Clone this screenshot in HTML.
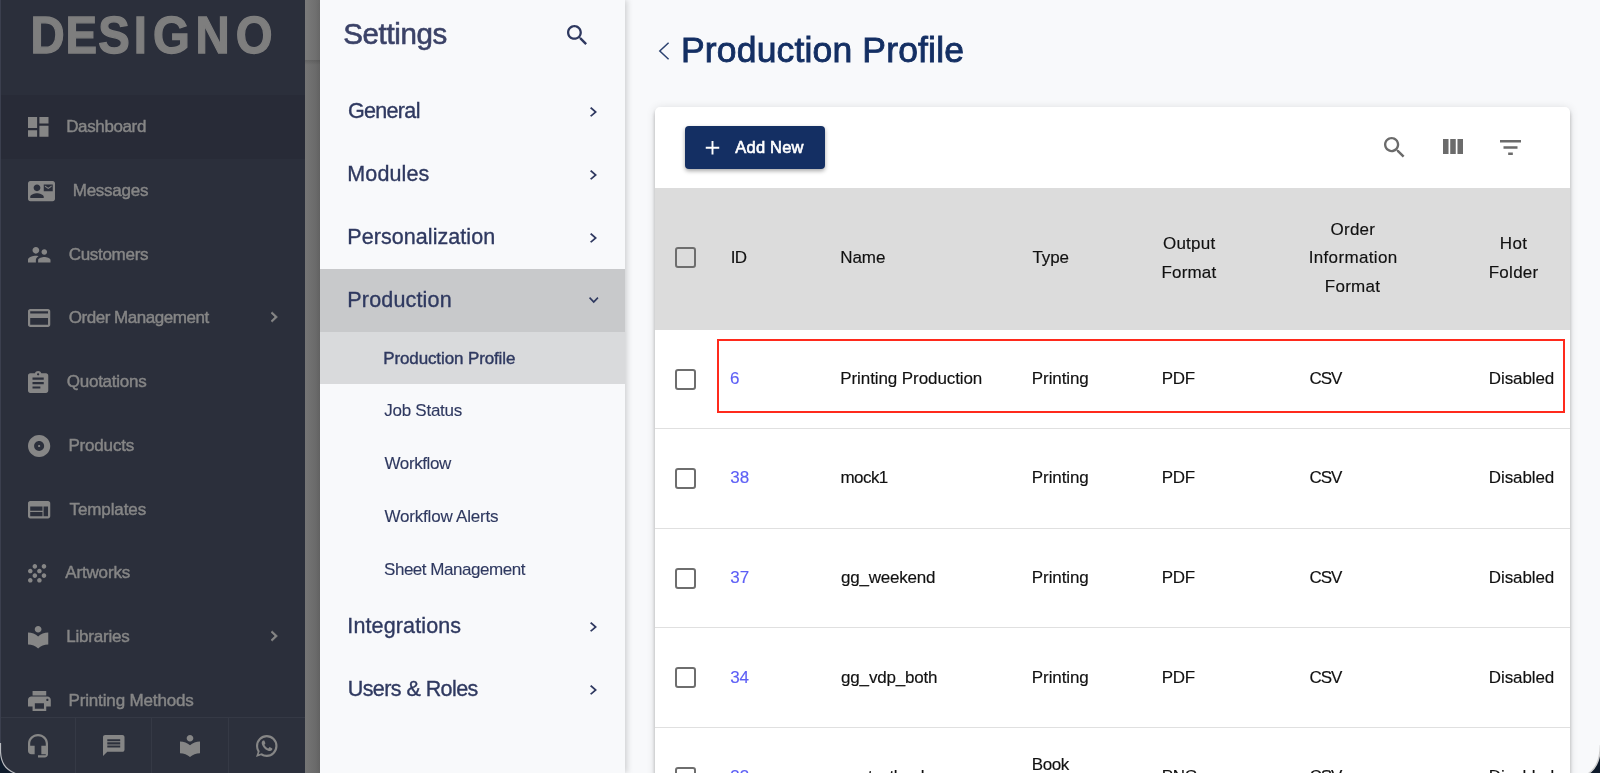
<!DOCTYPE html>
<html lang="en">
<head>
<meta charset="utf-8">
<title>Production Profile</title>
<style>
*{box-sizing:border-box;margin:0;padding:0}
html,body{width:1600px;height:773px;overflow:hidden}
body{position:relative;background:#f8f9fb;font-family:"Liberation Sans",sans-serif;color:#111}
.abs{position:absolute}
svg{display:block;overflow:visible}
.tl{position:absolute;left:0;top:0;width:100%;height:100%;will-change:transform}

/* ---------- left dark sidebar ---------- */
#side{position:absolute;left:0;top:0;width:305px;height:773px;background:#2b2f3b;overflow:hidden}
#logo{position:absolute;left:0;top:0}
#side .active{position:absolute;left:0;top:95px;width:305px;height:64px;background:#282b37}
.it{position:absolute;left:0;top:0;width:305px;height:0}
.it svg{position:absolute;fill:#868686}
.it span{position:absolute;white-space:nowrap;color:#868686;-webkit-text-stroke:.45px #868686}
#bbar{position:absolute;left:0;top:717px;width:305px;height:56px;background:#2c303c;border-top:1px solid #353945}
#bbar i{position:absolute;top:0;width:1px;height:56px;background:#353945}
#bbar svg{position:absolute;fill:#868686}

/* ---------- dim strip ---------- */
#strip{position:absolute;left:305px;top:0;width:15px;height:773px;background:linear-gradient(90deg,#757575,#6f6f6f 40%,#666)}
#strip b{position:absolute;left:0;top:0;width:15px;height:60px;background:linear-gradient(90deg,#7b7b7b,#747474 40%,#6b6b6b)}
#strip u{position:absolute;left:0;top:60px;width:15px;height:5px;background:linear-gradient(180deg,rgba(0,0,0,.12),rgba(0,0,0,0))}

/* ---------- settings panel ---------- */
#set{position:absolute;left:320px;top:0;width:305px;height:773px;background:#f8f9fb;box-shadow:2px 0 6px rgba(0,0,0,.17)}
#set span{position:absolute;white-space:nowrap;color:#2f3960;-webkit-text-stroke:0.35px #2f3960}
#set .h{color:#3b4267;-webkit-text-stroke:.6px #3b4267}
#set .s{-webkit-text-stroke:.12px #2f3960}
#set .s.a{-webkit-text-stroke:.4px #2f3960}
#set svg{position:absolute;fill:#2f3960}
#set .bg1{position:absolute;left:0;top:269px;width:305px;height:63px;background:#c8c9cb}
#set .bg2{position:absolute;left:0;top:332px;width:305px;height:52px;background:#d9dadc}

/* ---------- main ---------- */
#title{position:absolute;color:#142f63;white-space:nowrap;-webkit-text-stroke:0.85px #142f63}
#back{position:absolute}
#card{position:absolute;left:655px;top:107px;width:915px;height:700px;background:#fff;border-radius:5px;box-shadow:0 2px 4px -1px rgba(0,0,0,.2),0 4px 5px rgba(0,0,0,.14),0 1px 10px rgba(0,0,0,.12);overflow:hidden}
#btn{position:absolute;left:30px;top:19px;width:140px;height:43px;background:#142f63;border-radius:4px;box-shadow:0 2px 4px rgba(0,0,0,.35)}
#btn svg{position:absolute;fill:#fff}
#btn span{position:absolute;color:#fff;white-space:nowrap;-webkit-text-stroke:.6px #fff}
#card .ti{position:absolute;fill:#6b6b6b}
#thead{position:absolute;left:0;top:81px;width:915px;height:142px;background:#dcdcdc}
.th{position:absolute;color:#111;white-space:nowrap;-webkit-text-stroke:.15px #111}
.row{position:absolute;left:0;top:0;width:915px;height:0}
.row .ln{position:absolute;left:0;width:915px;height:1px;background:#e0e0e0}
.row span{position:absolute;color:#111;white-space:nowrap;-webkit-text-stroke:.15px #111}
.row span.id{color:#5d5ff5;-webkit-text-stroke:.15px #5d5ff5}
.cb{position:absolute;left:20px;width:21px;height:21px;border:2px solid #6e6e6e;border-radius:3px;background:#fff}
#red{position:absolute;border:2px solid #ff2a1c}

/* window rounded corners */
.corner{position:absolute}
#ledge{position:absolute;left:0;top:0;width:1px;height:752px;background:#3b3f4e}
</style>
</head>
<body>

<div id="side">
  <svg id="logo" width="305" height="70" viewBox="0 0 305 70"><text transform="scale(0.91,1)" x="33.6 71.9 108.0 147.1 168.1 214.7 259.2" y="52.7" font-family="Liberation Sans, sans-serif" font-weight="bold" font-size="52" fill="#7e7e7e" stroke="#7e7e7e" stroke-width="1.3">DESIGNO</text></svg>
  <div class="active"></div>
  <div class="tl">
  <div class="it"><svg style="left:27.5px;top:117px" width="20.5" height="19.75" viewBox="3 3 18 18" preserveAspectRatio="none"><path d="M3 13h8V3H3v10zm0 8h8v-6H3v6zm10 0h8V11h-8v10zm0-18v6h8V3h-8z"/></svg><span style="left:66.22px;top:118px;font-size:17px;line-height:17px;letter-spacing:-0.379px">Dashboard</span>
  </div>
  <div class="it"><svg style="left:27.5px;top:180.5px" width="27" height="20.25" viewBox="0 3 24 18" preserveAspectRatio="none"><path d="M21 8V7l-3 2-3-2v1l3 2 3-2zm1-5H2C.9 3 0 3.9 0 5v14c0 1.1.9 2 2 2h20c1.1 0 1.99-.9 1.99-2L24 5c0-1.1-.9-2-2-2zM8 6c1.66 0 3 1.34 3 3s-1.34 3-3 3-3-1.34-3-3 1.34-3 3-3zm6 12H2v-1c0-2 4-3.1 6-3.1s6 1.1 6 3.1v1zm8-6h-8V6h8v6z"/></svg><span style="left:72.72px;top:182px;font-size:17px;line-height:17px;letter-spacing:-0.246px">Messages</span>
  </div>
  <div class="it"><svg style="left:27.5px;top:247px" width="22.5" height="15.5" viewBox="2 5 20 14" preserveAspectRatio="none"><path d="M16.5 12c1.38 0 2.49-1.12 2.49-2.5S17.88 7 16.5 7C15.12 7 14 8.12 14 9.5s1.12 2.5 2.5 2.5zM9 11c1.66 0 2.99-1.34 2.99-3S10.66 5 9 5C7.34 5 6 6.34 6 8s1.34 3 3 3zm7.5 3c-1.83 0-5.5.92-5.5 2.75V19h11v-2.250c0-1.830-3.670-2.750-5.500-2.750zM9 13c-2.330 0-7 1.170-7 3.500V19h7v-2.250c0-.850.330-2.340 2.370-3.470C10.500 13.100 9.660 13 9 13z"/></svg><span style="left:68.75px;top:246px;font-size:17px;line-height:17px;letter-spacing:-0.307px">Customers</span>
  </div>
  <div class="it"><svg style="left:27.75px;top:309.25px" width="22.25" height="18" viewBox="2 4 20 16" preserveAspectRatio="none"><path d="M20 4H4c-1.11 0-1.99.89-1.99 2L2 18c0 1.11.89 2 2 2h16c1.11 0 2-.89 2-2V6c0-1.11-.89-2-2-2zm0 14H4v-6h16v6zm0-10H4V6h16v2z"/></svg><span style="left:68.75px;top:309px;font-size:17px;line-height:17px;letter-spacing:-0.468px">Order Management</span>
    <svg style="left:270.5px;top:312.45px" width="6.5" height="10" viewBox="8.59 6 7.41 12" preserveAspectRatio="none" stroke="#868686" stroke-width=".7"><path d="M10 6L8.59 7.41 13.17 12l-4.58 4.59L10 18l6-6z"/></svg>
  </div>
  <div class="it"><svg style="left:27.75px;top:371px" width="20.25" height="22" viewBox="3 1 18 20" preserveAspectRatio="none"><path d="M19 3h-4.18C14.4 1.84 13.3 1 12 1c-1.3 0-2.4.84-2.82 2H5c-1.1 0-2 .9-2 2v14c0 1.1.9 2 2 2h14c1.1 0 2-.9 2-2V5c0-1.1-.9-2-2-2zm-7 0c.55 0 1 .45 1 1s-.45 1-1 1-1-.45-1-1 .45-1 1-1zm2 14H7v-2h7v2zm3-4H7v-2h10v2zm0-4H7V7h10v2z"/></svg><span style="left:66.75px;top:373px;font-size:17px;line-height:17px;letter-spacing:-0.249px">Quotations</span>
  </div>
  <div class="it"><svg style="left:27.75px;top:434.75px" width="22.25" height="22" viewBox="2 2 20 20" preserveAspectRatio="none"><path d="M12 2C6.48 2 2 6.48 2 12s4.48 10 10 10 10-4.48 10-10S17.52 2 12 2zm0 14.5c-2.49 0-4.5-2.01-4.5-4.5S9.51 7.5 12 7.5s4.5 2.01 4.5 4.5-2.01 4.5-4.5 4.5zm0-5.5c-.55 0-1 .45-1 1s.45 1 1 1 1-.45 1-1-.45-1-1-1z"/></svg><span style="left:68.47px;top:437px;font-size:17px;line-height:17px;letter-spacing:-0.190px">Products</span>
  </div>
  <div class="it"><svg style="left:27.75px;top:501px" width="22.25" height="17.5" viewBox="2 4 20 16" preserveAspectRatio="none"><path d="M20 4H4c-1.1 0-1.99.9-1.99 2L2 18c0 1.1.9 2 2 2h16c1.1 0 2-.9 2-2V6c0-1.1-.9-2-2-2zm-5 14H4v-4h11v4zm0-5H4V9h11v4zm5 5h-4V9h4v9z"/></svg><span style="left:69.53px;top:501px;font-size:17px;line-height:17px;letter-spacing:-0.098px">Templates</span>
  </div>
  <div class="it"><svg style="left:27.75px;top:564.25px" width="18.25" height="18.5" viewBox="4 4 16 16" preserveAspectRatio="none"><path d="M10 12c-1.1 0-2 .9-2 2s.9 2 2 2 2-.9 2-2-.9-2-2-2zM6 8c-1.1 0-2 .9-2 2s.9 2 2 2 2-.9 2-2-.9-2-2-2zm0 8c-1.1 0-2 .9-2 2s.9 2 2 2 2-.9 2-2-.9-2-2-2zm12-8c1.1 0 2-.9 2-2s-.9-2-2-2-2 .9-2 2 .9 2 2 2zm-4 8c-1.1 0-2 .9-2 2s.9 2 2 2 2-.9 2-2-.9-2-2-2zm4-4c-1.1 0-2 .9-2 2s.9 2 2 2 2-.9 2-2-.9-2-2-2zm-4-4c-1.1 0-2 .9-2 2s.9 2 2 2 2-.9 2-2-.9-2-2-2zm-4-4c-1.1 0-2 .9-2 2s.9 2 2 2 2-.9 2-2-.9-2-2-2z"/></svg><span style="left:65.30px;top:564px;font-size:17px;line-height:17px;letter-spacing:-0.169px">Artworks</span>
  </div>
  <div class="it"><svg style="left:27.75px;top:626px" width="20.25" height="22.5" viewBox="3 2 18 20.55" preserveAspectRatio="none"><path d="M12 11.55C9.64 9.35 6.48 8 3 8v11c3.48 0 6.64 1.35 9 3.55 2.36-2.19 5.52-3.55 9-3.55V8c-3.48 0-6.64 1.35-9 3.55zM12 8c1.66 0 3-1.34 3-3s-1.34-3-3-3-3 1.34-3 3 1.34 3 3 3z"/></svg><span style="left:66.22px;top:628px;font-size:17px;line-height:17px;letter-spacing:-0.211px">Libraries</span>
    <svg style="left:270.5px;top:631.2px" width="6.5" height="10" viewBox="8.59 6 7.41 12" preserveAspectRatio="none" stroke="#868686" stroke-width=".7"><path d="M10 6L8.59 7.41 13.17 12l-4.58 4.59L10 18l6-6z"/></svg>
  </div>
  <div class="it"><svg style="left:27.6px;top:691px" width="22.8" height="20" viewBox="2 3 20 18" preserveAspectRatio="none"><path d="M19 8H5c-1.66 0-3 1.34-3 3v6h4v4h12v-4h4v-6c0-1.66-1.34-3-3-3zm-3 11H8v-5h8v5zm3-7c-.55 0-1-.45-1-1s.45-1 1-1 1 .45 1 1-.45 1-1 1zm-1-9H6v4h12V3z"/></svg><span style="left:68.47px;top:692px;font-size:17px;line-height:17px;letter-spacing:-0.147px">Printing Methods</span>
  </div>
  </div>
  <div id="bbar"><i style="left:75px"></i><i style="left:151px"></i><i style="left:228px"></i>
    <svg style="left:27.5px;top:16px" width="20" height="23.5" viewBox="3 1 18 22" preserveAspectRatio="none"><path d="M12 1c-4.97 0-9 4.03-9 9v7c0 1.66 1.34 3 3 3h3v-8H5v-2c0-3.87 3.13-7 7-7s7 3.13 7 7v2h-4v8h4v1h-7v2h6c1.66 0 3-1.34 3-3V10c0-4.97-4.03-9-9-9z"/></svg>
    <svg style="left:103px;top:17px" width="21.5" height="21" viewBox="2 2 20 20" preserveAspectRatio="none"><path d="M20 2H4c-1.1 0-1.99.9-1.99 2L2 22l4-4h14c1.1 0 2-.9 2-2V4c0-1.1-.9-2-2-2zm-2 12H6v-2h12v2zm0-3H6V9h12v2zm0-3H6V6h12v2z"/></svg>
    <svg style="left:180px;top:16.5px" width="20" height="22" viewBox="3 2 18 20.55" preserveAspectRatio="none"><path d="M12 11.55C9.64 9.35 6.48 8 3 8v11c3.48 0 6.64 1.35 9 3.55 2.36-2.19 5.52-3.55 9-3.55V8c-3.48 0-6.64 1.35-9 3.55zM12 8c1.66 0 3-1.34 3-3s-1.34-3-3-3-3 1.34-3 3 1.34 3 3 3z"/></svg>
    <svg style="left:255.5px;top:16.5px" width="21.5" height="22" viewBox="2 2 20 20" preserveAspectRatio="none"><path d="M16.75 13.96c.25.13.41.2.46.3.06.11.04.61-.21 1.18-.2.56-1.24 1.1-1.7 1.12-.46.02-.47.36-2.96-.73-2.49-1.09-3.99-3.75-4.11-3.92-.12-.17-.96-1.38-.92-2.61.05-1.22.69-1.8.95-2.04.24-.26.51-.29.68-.26h.47c.15 0 .36-.06.55.45l.69 1.87c.06.13.1.28.01.44l-.27.41-.39.42c-.12.12-.26.25-.12.5.12.26.62 1.09 1.32 1.78.91.88 1.71 1.17 1.95 1.3.24.14.39.12.54-.04l.81-.94c.19-.25.35-.19.58-.11l1.67.88M12 2a10 10 0 0 1 10 10 10 10 0 0 1-10 10c-1.97 0-3.8-.57-5.35-1.55L2 22l1.55-4.650A9.969 9.969 0 0 1 2 12 10 10 0 0 1 12 2m0 2a8 8 0 0 0-8 8c0 1.720.540 3.310 1.460 4.610L4.500 19.500l2.890-.960A7.950 7.950 0 0 0 12 20a8 8 0 0 0 8-8 8 8 0 0 0-8-8z"/></svg>
  </div>
</div>

<div id="strip"><b></b><u></u></div>

<div id="set">
  <div class="bg1"></div><div class="bg2"></div><div class="tl">
  <span class="h" style="left:23.33px;top:19px;font-size:29.5px;line-height:29.5px;letter-spacing:-0.393px">Settings</span>
  <svg style="left:246.6px;top:25.3px" width="20" height="20" viewBox="3 3 17.49 17.49" preserveAspectRatio="none"><path d="M15.5 14h-.79l-.28-.27C15.41 12.59 16 11.11 16 9.5 16 5.91 13.09 3 9.5 3S3 5.91 3 9.5 5.91 16 9.5 16c1.61 0 3.09-.59 4.23-1.57l.27.28v.79l5 4.990L20.490 19l-4.990-5zm-6 0C7.010 14 5 11.990 5 9.500S7.010 5 9.500 5 14 7.010 14 9.500 11.990 14 9.500 14z"/></svg>
  <span class="g" style="left:27.99px;top:101px;font-size:21.5px;line-height:21.5px;letter-spacing:-0.677px">General</span>
  <svg style="left:270px;top:106.8px" width="7" height="9.8" viewBox="8.59 6 7.41 12" preserveAspectRatio="none"><path d="M10 6L8.59 7.41 13.17 12l-4.58 4.59L10 18l6-6z"/></svg>
  <span class="g" style="left:27.32px;top:164px;font-size:21.5px;line-height:21.5px;letter-spacing:0.131px">Modules</span>
  <svg style="left:270px;top:170px" width="7" height="9.8" viewBox="8.59 6 7.41 12" preserveAspectRatio="none"><path d="M10 6L8.59 7.41 13.17 12l-4.58 4.59L10 18l6-6z"/></svg>
  <span class="g" style="left:27.32px;top:227px;font-size:21.5px;line-height:21.5px;letter-spacing:0.059px">Personalization</span>
  <svg style="left:270px;top:233px" width="7" height="9.8" viewBox="8.59 6 7.41 12" preserveAspectRatio="none"><path d="M10 6L8.59 7.41 13.17 12l-4.58 4.59L10 18l6-6z"/></svg>
  <span class="g" style="left:27.32px;top:290px;font-size:21.5px;line-height:21.5px;letter-spacing:0.172px">Production</span>
  <svg style="left:269.25px;top:297.25px" width="9.5" height="6.25" viewBox="6 8.59 12 7.41" preserveAspectRatio="none"><path d="M16.59 8.59L12 13.17 7.41 8.59 6 10l6 6 6-6z"/></svg>
  <span class="g" style="left:27.32px;top:616px;font-size:21.5px;line-height:21.5px;letter-spacing:0.132px">Integrations</span>
  <svg style="left:270px;top:622px" width="7" height="9.8" viewBox="8.59 6 7.41 12" preserveAspectRatio="none"><path d="M10 6L8.59 7.41 13.17 12l-4.58 4.59L10 18l6-6z"/></svg>
  <span class="g" style="left:27.66px;top:679px;font-size:21.5px;line-height:21.5px;letter-spacing:-0.557px">Users &amp; Roles</span>
  <svg style="left:270px;top:685px" width="7" height="9.8" viewBox="8.59 6 7.41 12" preserveAspectRatio="none"><path d="M10 6L8.59 7.41 13.17 12l-4.58 4.59L10 18l6-6z"/></svg>
  <span class="s a" style="left:63.22px;top:350px;font-size:17px;line-height:17px;letter-spacing:-0.119px">Production Profile</span>
  <span class="s" style="left:64.28px;top:402px;font-size:17px;line-height:17px;letter-spacing:-0.264px">Job Status</span>
  <span class="s" style="left:64.55px;top:455px;font-size:17px;line-height:17px;letter-spacing:-0.413px">Workflow</span>
  <span class="s" style="left:64.55px;top:508px;font-size:17px;line-height:17px;letter-spacing:-0.202px">Workflow Alerts</span>
  <span class="s" style="left:64.02px;top:561px;font-size:17px;line-height:17px;letter-spacing:-0.467px">Sheet Management</span>
  </div>
</div>

<svg id="back" style="left:658px;top:41.500px" width="12" height="18" viewBox="0 0 12 18"><path d="M10.6 0.8 L1.8 9 L10.600 17.200" fill="none" stroke="#2c4270" stroke-width="1.5"/></svg>
<div class="tl"><span id="title" style="left:681.03px;top:33px;font-size:35.5px;line-height:35.5px;letter-spacing:0.159px">Production Profile</span></div>

<div id="card">
  <div id="btn"><svg style="left:19.5px;top:15px" width="15" height="13.5" viewBox="5 5 14 14"><path d="M19 13h-6v6h-2v-6H5v-2h6V5h2v6h6v2z"/></svg><div class="tl"><span style="left:50.30px;top:13px;font-size:16.5px;line-height:16.5px;letter-spacing:0.208px">Add New</span></div></div>
  <svg class="ti" style="left:729px;top:30px" width="20.5" height="20.5" viewBox="3 3 17.49 17.49" preserveAspectRatio="none"><path d="M15.5 14h-.79l-.28-.27C15.41 12.59 16 11.11 16 9.5 16 5.91 13.09 3 9.5 3S3 5.91 3 9.5 5.91 16 9.5 16c1.61 0 3.09-.59 4.23-1.57l.27.28v.79l5 4.990L20.490 19l-4.990-5zm-6 0C7.010 14 5 11.990 5 9.500S7.010 5 9.500 5 14 7.010 14 9.500 11.990 14 9.500 14z"/></svg>
  <svg class="ti" style="left:788px;top:31.75px" width="20" height="15" viewBox="4 5 17 13" preserveAspectRatio="none"><path d="M4 5h4.7v13H4z M10.15 5h4.7v13h-4.7z M16.3 5H21v13h-4.7z"/></svg>
  <svg class="ti" style="left:845px;top:32.5px" width="21" height="15" viewBox="3 6 18 12" preserveAspectRatio="none"><path d="M10 18h4v-2h-4v2zM3 6v2h18V6H3zm3 7h12v-2H6v2z"/></svg>
  <div id="thead">
    <div class="tl">
    <div class="cb" style="left:20px;top:59px;background:transparent"></div>
    <span class="th" style="left:75.72px;top:61px;font-size:17px;line-height:17px;letter-spacing:-0.683px">ID</span>
    <span class="th" style="left:185.22px;top:61px;font-size:17px;line-height:17px;letter-spacing:-0.060px">Name</span>
    <span class="th" style="left:377.48px;top:61px;font-size:17px;line-height:17px;letter-spacing:-0.084px">Type</span>
    <span class="th" style="left:507.95px;top:47px;font-size:17px;line-height:17px;letter-spacing:0.241px">Output</span>
    <span class="th" style="left:506.47px;top:76px;font-size:17px;line-height:17px;letter-spacing:0.166px">Format</span>
    <span class="th" style="left:675.50px;top:33px;font-size:17px;line-height:17px;letter-spacing:0.256px">Order</span>
    <span class="th" style="left:653.67px;top:61px;font-size:17px;line-height:17px;letter-spacing:0.344px">Information</span>
    <span class="th" style="left:669.77px;top:90px;font-size:17px;line-height:17px;letter-spacing:0.286px">Format</span>
    <span class="th" style="left:844.87px;top:47px;font-size:17px;line-height:17px;letter-spacing:0.308px">Hot</span>
    <span class="th" style="left:833.67px;top:76px;font-size:17px;line-height:17px;letter-spacing:0.285px">Folder</span>
    </div>
  </div>
  <div class="tl">
  <div class="row"><div class="ln" style="top:321px"></div><div class="cb" style="top:262px"></div>
    <span class="id" style="left:75.00px;top:263px;font-size:17px;line-height:17px;letter-spacing:0.000px">6</span>
    <span style="left:185.27px;top:263px;font-size:17px;line-height:17px;letter-spacing:-0.089px">Printing Production</span>
    <span style="left:376.87px;top:263px;font-size:17px;line-height:17px;letter-spacing:-0.115px">Printing</span>
    <span style="left:506.87px;top:263px;font-size:17px;line-height:17px;letter-spacing:-0.408px">PDF</span>
    <span style="left:654.40px;top:263px;font-size:17px;line-height:17px;letter-spacing:-0.970px">CSV</span>
    <span style="left:833.87px;top:263px;font-size:17px;line-height:17px;letter-spacing:-0.117px">Disabled</span>
  </div>
  <div class="row"><div class="ln" style="top:421px"></div><div class="cb" style="top:361px"></div>
    <span class="id" style="left:75.27px;top:362px;font-size:17px;line-height:17px;letter-spacing:-0.039px">38</span>
    <span style="left:185.54px;top:362px;font-size:17px;line-height:17px;letter-spacing:-0.580px">mock1</span>
    <span style="left:376.87px;top:362px;font-size:17px;line-height:17px;letter-spacing:-0.115px">Printing</span>
    <span style="left:506.87px;top:362px;font-size:17px;line-height:17px;letter-spacing:-0.408px">PDF</span>
    <span style="left:654.40px;top:362px;font-size:17px;line-height:17px;letter-spacing:-0.970px">CSV</span>
    <span style="left:833.87px;top:362px;font-size:17px;line-height:17px;letter-spacing:-0.117px">Disabled</span>
  </div>
  <div class="row"><div class="ln" style="top:520px"></div><div class="cb" style="top:461px"></div>
    <span class="id" style="left:75.27px;top:462px;font-size:17px;line-height:17px;letter-spacing:-0.039px">37</span>
    <span style="left:186.07px;top:462px;font-size:17px;line-height:17px;letter-spacing:-0.214px">gg_weekend</span>
    <span style="left:376.87px;top:462px;font-size:17px;line-height:17px;letter-spacing:-0.115px">Printing</span>
    <span style="left:506.87px;top:462px;font-size:17px;line-height:17px;letter-spacing:-0.408px">PDF</span>
    <span style="left:654.40px;top:462px;font-size:17px;line-height:17px;letter-spacing:-0.970px">CSV</span>
    <span style="left:833.87px;top:462px;font-size:17px;line-height:17px;letter-spacing:-0.117px">Disabled</span>
  </div>
  <div class="row"><div class="ln" style="top:620px"></div><div class="cb" style="top:560px"></div>
    <span class="id" style="left:75.27px;top:562px;font-size:17px;line-height:17px;letter-spacing:-0.305px">34</span>
    <span style="left:186.07px;top:562px;font-size:17px;line-height:17px;letter-spacing:-0.183px">gg_vdp_both</span>
    <span style="left:376.87px;top:562px;font-size:17px;line-height:17px;letter-spacing:-0.115px">Printing</span>
    <span style="left:506.87px;top:562px;font-size:17px;line-height:17px;letter-spacing:-0.408px">PDF</span>
    <span style="left:654.40px;top:562px;font-size:17px;line-height:17px;letter-spacing:-0.970px">CSV</span>
    <span style="left:833.87px;top:562px;font-size:17px;line-height:17px;letter-spacing:-0.117px">Disabled</span>
  </div>
  <div class="row"><div class="ln" style="top:720px"></div><div class="cb" style="top:660px"></div>
    <span class="id" style="left:75.27px;top:661px;font-size:17px;line-height:17px;letter-spacing:-0.039px">33</span>
    <span style="left:186.07px;top:661px;font-size:17px;line-height:17px;letter-spacing:-0.436px">gg_testbook</span>
    <span style="left:376.87px;top:649px;font-size:17px;line-height:17px;letter-spacing:-0.462px">Book</span>
    <span style="left:376.87px;top:673px;font-size:17px;line-height:17px;letter-spacing:-0.188px">Production</span>
    <span style="left:506.87px;top:661px;font-size:17px;line-height:17px;letter-spacing:-0.470px">PNG</span>
    <span style="left:654.40px;top:661px;font-size:17px;line-height:17px;letter-spacing:-0.970px">CSV</span>
    <span style="left:833.87px;top:661px;font-size:17px;line-height:17px;letter-spacing:-0.117px">Disabled</span>
  </div>
  </div>
  <div id="red" style="left:62px;top:232px;width:848px;height:74px"></div>
</div>
<div id="ledge"></div>
<svg class="corner" style="left:0;top:743px" width="20" height="30" viewBox="0 743 20 30"><path d="M0 743 L0 752 C0.6 762 4 769 15 773.500 L0 773.500 Z" fill="#0f1b2b"/><path d="M0.5 743 L0.5 752 C1.100 762 4.500 769 15.500 773.500" fill="none" stroke="#b9bbc0" stroke-width="1.200"/></svg>
<svg class="corner" style="left:1580px;top:743px" width="20" height="30" viewBox="1580 743 20 30"><path d="M1600.500 745 C1600 757 1598 767 1588.500 773.500 L1600.500 773.500 Z" fill="#0f1b2b"/><path d="M1600.500 745 C1600 757 1598 767 1588.500 773.500" fill="none" stroke="#d0d0d0" stroke-width="1.500"/></svg>

</body>
</html>
